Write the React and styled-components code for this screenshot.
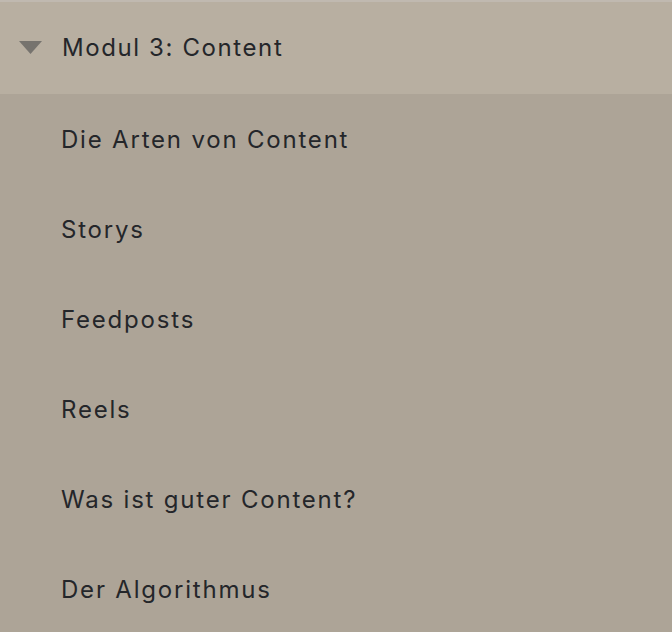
import React from "react";
import styled, { createGlobalStyle } from "styled-components";

const GlobalStyle = createGlobalStyle`
  html, body {
    margin: 0;
    padding: 0;
    background-color: #ada497;
  }
  body {
    font-family: "Inter", "Noto Sans", sans-serif;
  }
`;

const lessons = [
  "Die Arten von Content",
  "Storys",
  "Feedposts",
  "Reels",
  "Was ist guter Content?",
  "Der Algorithmus",
];

function App() {
  return (
    <>
      <GlobalStyle />
      <Wrapper>
        <ModuleHeader>
          <Caret viewBox="0 0 23 13" aria-hidden="true">
            <polygon points="0,0 23,0 11.5,13" />
          </Caret>
          <ModuleTitle>Modul 3: Content</ModuleTitle>
        </ModuleHeader>
        <LessonList>
          {lessons.map((title) => (
            <LessonRow key={title}>{title}</LessonRow>
          ))}
        </LessonList>
      </Wrapper>
    </>
  );
}

export default App;

const Wrapper = styled.div`
  width: 672px;
  height: 632px;
  overflow: hidden;
  background-color: #ada497;
  border-top: 2px solid #c0b9b0;
  box-sizing: border-box;
`;

const ModuleHeader = styled.div`
  display: flex;
  align-items: center;
  height: 92px;
  padding-left: 19px;
  padding-bottom: 2px;
  background-color: #b8afa1;
  box-sizing: border-box;
`;

const Caret = styled.svg`
  width: 23px;
  height: 13px;
  margin-right: 20px;
  fill: #76736e;
`;

const ModuleTitle = styled.span`
  font-size: 24px;
  letter-spacing: 1.6px;
  color: #24262a;
`;

const LessonList = styled.div`
  display: flex;
  flex-direction: column;
`;

const LessonRow = styled.div`
  display: flex;
  align-items: center;
  height: 90px;
  padding-left: 61px;
  font-size: 24px;
  letter-spacing: 1.8px;
  color: #24262a;
`;
